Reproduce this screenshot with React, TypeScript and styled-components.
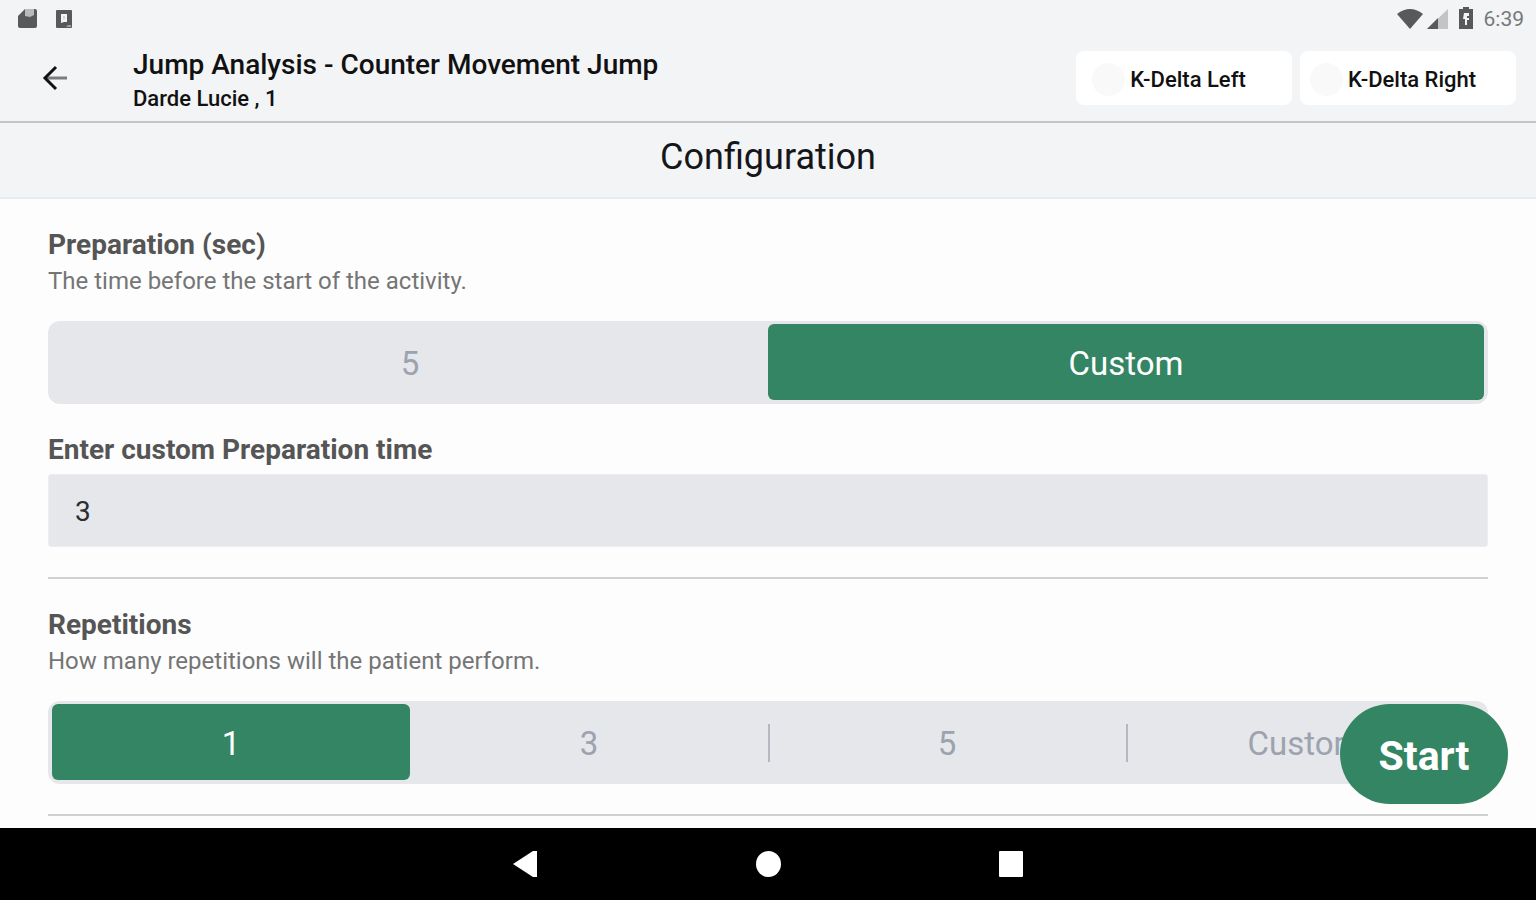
import React, { useState } from "react";
import styled, { createGlobalStyle } from "styled-components";

const color = {
  green: "#348563",
  band: "#f3f4f6",
  field: "#e5e7eb",
  muted: "#9ca3af",
  label: "#555555",
  help: "#757575",
  rule: "#cfd1d3",
};

const GlobalStyle = createGlobalStyle`
  * { box-sizing: border-box; }
  body {
    margin: 0;
    font-family: Roboto, "Liberation Sans", sans-serif;
    background: #fdfdfd;
  }
  button, input { font: inherit; }
`;

const Screen = styled.div`
  display: flex;
  flex-direction: column;
  height: 100vh;
`;

const StatusBar = styled.div`
  display: flex;
  align-items: center;
  justify-content: space-between;
  height: 37px;
  padding: 0 12px 0 16px;
  background: ${color.band};
  color: #58595b;
`;

const StatusGroup = styled.div<{ $gap: number }>`
  display: flex;
  align-items: center;
  gap: ${(p) => p.$gap}px;
`;

const Clock = styled.time`
  font-size: 21px;
  line-height: 24px;
  color: #77787a;
`;

const Header = styled.header`
  display: flex;
  align-items: center;
  height: 86px;
  padding: 0 20px 0 40px;
  background: ${color.band};
  border-bottom: 2px solid #c2c4c6;
`;

const BackButton = styled.button`
  display: flex;
  padding: 0;
  border: 0;
  background: none;
  color: #111;
  cursor: pointer;
`;

const Heading = styled.div`
  flex: 1;
  padding: 4px 0 0 64px;
`;

const ScreenTitle = styled.h1`
  margin: 0;
  font-size: 28px;
  line-height: 36px;
  font-weight: 500;
  color: #111;
`;

const Patient = styled.p`
  margin: 0;
  font-size: 22px;
  line-height: 32px;
  font-weight: 500;
  color: #111;
`;

const Devices = styled.div`
  display: flex;
  gap: 8px;
  margin-top: -2px;
`;

const Device = styled.button`
  display: flex;
  align-items: center;
  justify-content: center;
  gap: 5px;
  width: 216px;
  height: 54px;
  padding: 2px 30px 0 0;
  border: 0;
  border-radius: 8px;
  background: #fff;
  color: #111;
  font-size: 22px;
  font-weight: 500;
  cursor: pointer;
`;

const DeviceDot = styled.span`
  width: 33px;
  height: 33px;
  border-radius: 50%;
  background: #f9f9f9;
`;

const PageTitle = styled.h2`
  margin: 0;
  padding: 13px 0 19px;
  border-bottom: 2px solid #e9ebee;
  background: ${color.band};
  font-size: 36px;
  line-height: 42px;
  font-weight: 400;
  text-align: center;
  color: #15161a;
`;

const Content = styled.main`
  position: relative;
  flex: 1;
  min-height: 0;
  display: flex;
  flex-direction: column;
`;

const Form = styled.form`
  flex: 1;
  min-height: 0;
  overflow: auto;
  padding: 0 48px;
`;

const Section = styled.section`
  padding: 30px 0;
  border-bottom: 2px solid ${color.rule};
`;

const Label = styled.div`
  font-size: 28px;
  line-height: 32px;
  font-weight: 700;
  color: ${color.label};
`;

const Help = styled.p`
  margin: 4px 0 24px;
  font-size: 24px;
  line-height: 32px;
  color: ${color.help};
`;

const Segments = styled.div`
  display: flex;
  height: 83px;
  padding: 3px 4px 4px;
  border-radius: 12px;
  background: ${color.field};
`;

const Segment = styled.label<{ $active: boolean; $divided: boolean }>`
  flex: 1;
  display: flex;
  align-items: center;
  justify-content: center;
  position: relative;
  padding-top: 4px;
  border-radius: 6px;
  background: ${(p) => (p.$active ? color.green : "transparent")};
  color: ${(p) => (p.$active ? "#fff" : color.muted)};
  font-size: 33px;
  line-height: 40px;
  cursor: pointer;

  &::before {
    content: "";
    display: ${(p) => (p.$divided ? "block" : "none")};
    position: absolute;
    top: 20px;
    left: 0;
    width: 2px;
    height: 38px;
    background: #b4b9c1;
  }
`;

const SegmentRadio = styled.input`
  position: absolute;
  inset: 0;
  width: 100%;
  height: 100%;
  margin: 0;
  opacity: 0;
  cursor: pointer;
`;

const Field = styled.label`
  display: block;
  margin-top: 30px;
`;

const FieldInput = styled.input`
  display: block;
  width: 100%;
  height: 73px;
  margin-top: 8px;
  padding: 2px 26px 0;
  border: 1px solid #eceef1;
  border-radius: 3px;
  background: ${color.field};
  font-size: 28px;
  color: #2b2d31;
  outline: none;
`;

const StartButton = styled.button`
  position: absolute;
  right: 28px;
  bottom: 24px;
  width: 168px;
  height: 100px;
  padding: 3px 0 0;
  border: 0;
  border-radius: 50px;
  background: ${color.green};
  color: #fff;
  font-size: 41px;
  font-weight: 700;
  cursor: pointer;
`;

const NavBar = styled.nav`
  display: flex;
  justify-content: center;
  height: 72px;
  background: #000;
`;

const NavButton = styled.button`
  display: flex;
  align-items: center;
  justify-content: center;
  width: 243px;
  padding: 0;
  border: 0;
  background: none;
  color: #fff;
  cursor: pointer;
`;

type SegmentedProps = {
  name: string;
  options: string[];
  value: string;
  onChange: (value: string) => void;
};

function Segmented({ name, options, value, onChange }: SegmentedProps) {
  return (
    <Segments role="radiogroup" aria-label={name}>
      {options.map((option, i) => (
        <Segment
          key={option}
          $active={option === value}
          $divided={i > 0 && option !== value && options[i - 1] !== value}
        >
          <SegmentRadio
            type="radio"
            name={name}
            checked={option === value}
            onChange={() => onChange(option)}
          />
          {option}
        </Segment>
      ))}
    </Segments>
  );
}

const SdCardIcon = () => (
  <svg width="22" height="24" viewBox="0 0 22 24" fill="currentColor" aria-hidden="true">
    <path d="M2 9 9 2h10a2 2 0 0 1 2 2v15a2 2 0 0 1-2 2H4a2 2 0 0 1-2-2z" />
    <path d="M9 2h9v6l-4 2-5-1z" fill="#b9babc" />
  </svg>
);

const AppIcon = () => (
  <svg width="18" height="20" viewBox="0 0 18 20" aria-hidden="true">
    <rect x="1" y="1" width="16" height="18" rx="1" fill="currentColor" />
    <path d="M6 5h6v8H9l-3 1z" fill="#f3f4f6" />
    <path d="M8 7h2v3H8z" fill="#d4d5d7" />
    <path d="M13 16h3v2h-5z" fill="#a2a3a5" />
  </svg>
);

const WifiIcon = () => (
  <svg width="26" height="22" viewBox="0 0 26 22" aria-hidden="true">
    <path d="M0 6Q13-4 26 6L13 21z" fill="currentColor" />
  </svg>
);

const SignalIcon = () => (
  <svg width="21" height="21" viewBox="0 0 21 21" aria-hidden="true">
    <path d="M0 21 21 1v20z" fill="#c3c4c6" />
    <path d="M0 21 11 10v11z" fill="currentColor" />
  </svg>
);

const BatteryIcon = () => (
  <svg width="14" height="24" viewBox="0 0 14 24" aria-hidden="true">
    <path d="M4 0h6v2h4v20H0V2h4z" fill="currentColor" />
    <path d="M5 6h5v3H8v2h2v2H8v5H6v-6H4z" fill="#f3f4f6" />
  </svg>
);

const ArrowIcon = () => (
  <svg width="29" height="28" viewBox="0 0 29 28" fill="none" aria-hidden="true">
    <path d="M5 13h22" stroke="#7b7c7e" strokeWidth="3" />
    <path d="M16 2 5 13l11 11" stroke="currentColor" strokeWidth="3" />
  </svg>
);

export default function App() {
  const [preparation, setPreparation] = useState("Custom");
  const [customTime, setCustomTime] = useState("3");
  const [repetitions, setRepetitions] = useState("1");

  return (
    <>
      <GlobalStyle />
      <Screen>
        <StatusBar>
          <StatusGroup $gap={17}>
            <SdCardIcon />
            <AppIcon />
          </StatusGroup>
          <StatusGroup $gap={11}>
            <StatusGroup $gap={4}>
              <WifiIcon />
              <SignalIcon />
            </StatusGroup>
            <BatteryIcon />
            <Clock>6:39</Clock>
          </StatusGroup>
        </StatusBar>
        <Header>
          <BackButton type="button" aria-label="Back">
            <ArrowIcon />
          </BackButton>
          <Heading>
            <ScreenTitle>Jump Analysis - Counter Movement Jump</ScreenTitle>
            <Patient>Darde Lucie , 1</Patient>
          </Heading>
          <Devices>
            <Device type="button">
              <DeviceDot />
              K-Delta Left
            </Device>
            <Device type="button">
              <DeviceDot />
              K-Delta Right
            </Device>
          </Devices>
        </Header>
        <PageTitle>Configuration</PageTitle>
        <Content>
          <Form onSubmit={(e) => e.preventDefault()}>
            <Section>
              <Label>Preparation (sec)</Label>
              <Help>The time before the start of the activity.</Help>
              <Segmented
                name="Preparation"
                options={["5", "Custom"]}
                value={preparation}
                onChange={setPreparation}
              />
              {preparation === "Custom" && (
                <Field>
                  <Label as="span">Enter custom Preparation time</Label>
                  <FieldInput
                    inputMode="numeric"
                    value={customTime}
                    onChange={(e) => setCustomTime(e.target.value)}
                  />
                </Field>
              )}
            </Section>
            <Section>
              <Label>Repetitions</Label>
              <Help>How many repetitions will the patient perform.</Help>
              <Segmented
                name="Repetitions"
                options={["1", "3", "5", "Custom"]}
                value={repetitions}
                onChange={setRepetitions}
              />
            </Section>
          </Form>
          <StartButton type="button">Start</StartButton>
        </Content>
        <NavBar>
          <NavButton type="button" aria-label="Navigate back">
            <svg width="24" height="26" viewBox="0 0 24 26" fill="currentColor">
              <path d="M0 13 20 0h4v26h-4z" />
            </svg>
          </NavButton>
          <NavButton type="button" aria-label="Home">
            <svg width="25" height="26" viewBox="0 0 25 26" fill="currentColor">
              <ellipse cx="12.5" cy="13" rx="12.5" ry="13" />
            </svg>
          </NavButton>
          <NavButton type="button" aria-label="Recent apps">
            <svg width="24" height="26" viewBox="0 0 24 26" fill="currentColor">
              <rect width="24" height="26" rx="1" />
            </svg>
          </NavButton>
        </NavBar>
      </Screen>
    </>
  );
}
